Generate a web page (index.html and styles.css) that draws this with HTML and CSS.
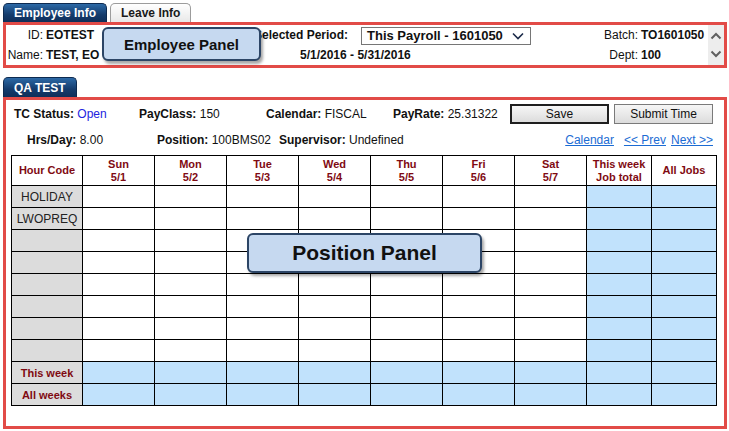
FILE: index.html
```html
<!DOCTYPE html>
<html>
<head>
<meta charset="utf-8">
<link rel="stylesheet" href="styles.css">
</head>
<body>
<div class="tabs">
  <div class="tab tab-active">Employee Info</div>
  <div class="tab tab-idle">Leave Info</div>
</div>
<section class="panel emp-panel">
  <div class="emp-grid">
    <span class="lbl">ID:</span>
    <b class="val">EOTEST</b>
    <b class="lbl">Selected Period:</b>
    <span></span>
    <div class="select">
      <span>This Payroll - 1601050</span>
      <svg class="select-arrow" width="12" height="8" viewBox="0 0 12 8"><polyline points="1,1.5 6,6.5 11,1.5" fill="none" stroke="#1c2b4a" stroke-width="1.6"/></svg>
    </div>
    <span></span>
    <span class="lbl">Batch:</span>
    <b class="val">TO1601050</b>

    <span class="lbl">Name:</span>
    <b class="val">TEST, EO</b>
    <b class="dates">5/1/2016 - 5/31/2016</b>
    <span class="lbl">Dept:</span>
    <b class="val">100</b>
  </div>
  <div class="scrollbar">
    <svg width="12" height="8" viewBox="0 0 12 8"><polyline points="1.5,6.5 6,2 10.5,6.5" fill="none" stroke="#606060" stroke-width="2"/></svg>
    <svg width="12" height="8" viewBox="0 0 12 8"><polyline points="1.5,1.5 6,6 10.5,1.5" fill="none" stroke="#606060" stroke-width="2"/></svg>
  </div>
  <div class="callout callout-emp">Employee Panel</div>
</section>

<div class="tabs tabs-pos">
  <div class="tab tab-active">QA TEST</div>
</div>
<section class="panel pos-panel">
  <div class="pos-row1">
    <span><b>TC Status:</b> <span class="open">Open</span></span>
    <span><b>PayClass:</b> 150</span>
    <span><b>Calendar:</b> FISCAL</span>
    <span><b>PayRate:</b> 25.31322</span>
    <div class="buttons">
      <button class="btn btn-default">Save</button>
      <button class="btn">Submit Time</button>
    </div>
  </div>
  <div class="pos-row2">
    <span><b>Hrs/Day:</b> 8.00</span>
    <span><b>Position:</b> 100BMS02</span>
    <span><b>Supervisor:</b> Undefined</span>
    <div class="links">
      <a class="link link-cal">Calendar</a>
      <a class="link">&lt;&lt; Prev</a>
      <a class="link">Next &gt;&gt;</a>
    </div>
  </div>
  <table class="grid">
    <colgroup>
      <col class="c-code"><col class="c-day"><col class="c-day"><col class="c-day"><col class="c-day"><col class="c-day"><col class="c-day"><col class="c-day"><col class="c-tot"><col class="c-tot">
    </colgroup>
    <thead>
      <tr class="head">
        <th>Hour Code</th>
        <th>Sun<br>5/1</th><th>Mon<br>5/2</th><th>Tue<br>5/3</th><th>Wed<br>5/4</th><th>Thu<br>5/5</th><th>Fri<br>5/6</th><th>Sat<br>5/7</th>
        <th>This week<br>Job total</th><th>All Jobs</th>
      </tr>
    </thead>
    <tbody>
      <tr><td class="code">HOLIDAY</td><td></td><td></td><td></td><td></td><td></td><td></td><td></td><td class="tot"></td><td class="tot"></td></tr>
      <tr><td class="code">LWOPREQ</td><td></td><td></td><td></td><td></td><td></td><td></td><td></td><td class="tot"></td><td class="tot"></td></tr>
      <tr><td class="code"></td><td></td><td></td><td></td><td></td><td></td><td></td><td></td><td class="tot"></td><td class="tot"></td></tr>
      <tr><td class="code"></td><td></td><td></td><td></td><td></td><td></td><td></td><td></td><td class="tot"></td><td class="tot"></td></tr>
      <tr><td class="code"></td><td></td><td></td><td></td><td></td><td></td><td></td><td></td><td class="tot"></td><td class="tot"></td></tr>
      <tr><td class="code"></td><td></td><td></td><td></td><td></td><td></td><td></td><td></td><td class="tot"></td><td class="tot"></td></tr>
      <tr><td class="code"></td><td></td><td></td><td></td><td></td><td></td><td></td><td></td><td class="tot"></td><td class="tot"></td></tr>
      <tr><td class="code"></td><td></td><td></td><td></td><td></td><td></td><td></td><td></td><td class="tot"></td><td class="tot"></td></tr>
      <tr class="sum"><td class="code sum-lbl">This week</td><td></td><td></td><td></td><td></td><td></td><td></td><td></td><td></td><td></td></tr>
      <tr class="sum"><td class="code sum-lbl">All weeks</td><td></td><td></td><td></td><td></td><td></td><td></td><td></td><td></td><td></td></tr>
    </tbody>
  </table>
  <div class="callout callout-pos">Position Panel</div>
</section>
</body>
</html>
```

FILE: styles.css
```css
* { box-sizing: border-box; }
html, body { margin: 0; padding: 0; background: #fff; }
body {
  font-family: "Liberation Sans", Arial, sans-serif;
  font-size: 12px;
  color: #111;
  width: 729px;
}

/* tabs */
.tabs {
  display: flex;
  gap: 3px;
  padding: 3px 0 0 3px;
  height: 22px;
}
.tabs-pos { padding-top: 0; margin-top: 9px; height: 20px; }
.tab {
  height: 100%;
  padding: 0 10px;
  display: flex;
  align-items: center;
  font-weight: bold;
  border-radius: 5px 5px 0 0;
}
.tab-active {
  color: #fff;
  background: linear-gradient(#2c69a6, #143b6c 60%, #0f2f59);
  border: 1px solid #0d2a50;
  border-bottom: none;
}
.tab-idle {
  color: #1a1a1a;
  background: linear-gradient(#ffffff, #e8e8e8);
  border: 1px solid #9c9c9c;
  border-bottom: none;
}

/* panels */
.panel {
  position: relative;
  margin-left: 3px;
  width: 724px;
  border: 3px solid #e24b47;
}
.emp-panel { display: flex; }
.emp-grid {
  flex: 1;
  display: grid;
  grid-template-columns: 37px 199px 106px 13px 170px 1fr 40px 70px;
  grid-template-rows: 20px 20px;
  align-items: center;
  white-space: nowrap;
}
.lbl { text-align: right; }
.val { padding-left: 3px; }
.dates { grid-column: 3 / 7; padding-left: 58px; }
.select {
  height: 18px;
  margin-top: 1px;
  border: 1px solid #767676;
  display: flex;
  align-items: center;
  justify-content: space-between;
  padding: 0 5px 0 5px;
  font-weight: bold;
  font-size: 13px;
  color: #111;
}
.select-arrow { margin-right: 1px; }
.scrollbar {
  width: 16px;
  background: #ededed;
  display: flex;
  flex-direction: column;
  align-items: center;
  justify-content: space-around;
  padding: 2px 0;
}

.callout {
  position: absolute;
  background: #c6d9f0;
  border: 2px solid #2c4566;
  border-radius: 6px;
  box-shadow: 2px 3px 3px rgba(0, 0, 0, 0.35);
  display: flex;
  align-items: center;
  justify-content: center;
  font-weight: bold;
  color: #111;
}
.callout-emp {
  left: 96px; top: 2px;
  width: 159px; height: 34px;
  font-size: 15px;
}
.callout-pos {
  left: 241px; top: 133px;
  width: 235px; height: 40px;
  font-size: 21px;
}

/* position panel */
.pos-panel { padding: 4px 0 20px 0; }
.pos-row1 {
  display: grid;
  grid-template-columns: 125px 127px 127px 117px auto;
  align-items: center;
  height: 20px;
  padding-left: 8px;
  white-space: nowrap;
}
.open { color: #2323e0; }
.buttons { display: flex; gap: 5px; }
.btn {
  width: 99px;
  height: 20px;
  font-family: "Liberation Sans", Arial, sans-serif;
  font-size: 12px;
  color: #111;
  background: linear-gradient(#f6f6f6, #dcdcdc);
  border: 1px solid #7a7a7a;
  border-radius: 0;
  padding: 0;
}
.btn-default { border: 2px solid #1e1e1e; }
.pos-row2 {
  display: grid;
  grid-template-columns: 130px 122px 1fr auto;
  align-items: center;
  height: 20px;
  margin-top: 6px;
  padding: 0 11px 0 21px;
  white-space: nowrap;
}
.links { display: flex; }
.link { color: #1b6bd3; text-decoration: underline; margin-left: 5px; }
.link-cal { margin-right: 5px; }

/* table */
.grid {
  margin: 5px 0 0 5px;
  border-collapse: collapse;
  table-layout: fixed;
  width: 706px;
}
.c-code { width: 71px; }
.c-day { width: 72px; }
.c-tot { width: 65px; }
.grid th, .grid td {
  border: 1px solid #000;
  padding: 0;
  text-align: center;
  vertical-align: middle;
}
.grid tr { height: 22px; }
.grid tr.head { height: 30px; }
.grid th {
  color: #7f0a12;
  font-weight: bold;
  font-size: 11px;
  line-height: 13px;
}
.grid td.code { background: #dcdcdc; color: #222; }
.grid td.tot, .grid tr.sum td { background: #c1e2fc; }
.grid tr.sum td.sum-lbl { background: #dcdcdc; color: #7f0a12; font-weight: bold; font-size: 11px; }
```
